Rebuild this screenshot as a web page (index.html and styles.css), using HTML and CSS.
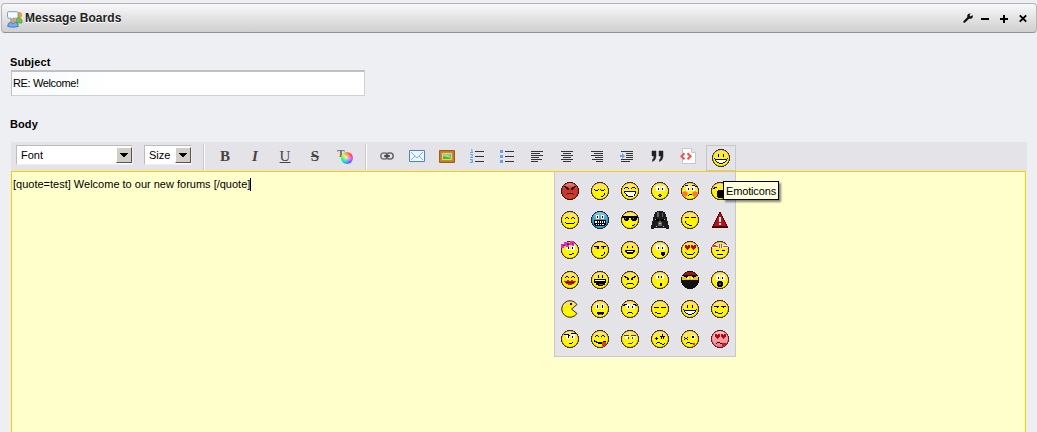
FILE: index.html
```html
<!DOCTYPE html>
<html lang="en">
<head>
<meta charset="utf-8">
<title>Message Boards</title>
<link rel="stylesheet" href="styles.css">
</head>
<body>
<svg class="defs" width="0" height="0">
  <defs>
    <radialGradient id="gy" cx=".5" cy=".75" r=".8"><stop offset="0" stop-color="#ffff00"/><stop offset=".5" stop-color="#fff200"/><stop offset=".8" stop-color="#ffe36a"/><stop offset="1" stop-color="#fbd49a"/></radialGradient>
    <linearGradient id="gr" x2="0" y2="1"><stop offset="0" stop-color="#e89078"/><stop offset=".4" stop-color="#c83428"/><stop offset="1" stop-color="#d84028"/></linearGradient>
    <linearGradient id="gb" x2="0" y2="1"><stop offset="0" stop-color="#98d0ec"/><stop offset=".5" stop-color="#3898cc"/><stop offset="1" stop-color="#40a8dc"/></linearGradient>
    <linearGradient id="gp" x2="0" y2="1"><stop offset="0" stop-color="#f8c8c0"/><stop offset="1" stop-color="#f47888"/></linearGradient>
    <path id="disc" d="M6 0h6v1h2v1h1v1h1v1h1v2h1v6h-1v2h-1v1h-1v1h-1v1h-2v1H6v-1H4v-1H3v-1H2v-1H1v-2H0V6h1V4h1V3h1V2h1V1h2z"/>
    <g id="face"><use href="#disc" fill="#42300a"/><circle cx="9" cy="9" r="8.1" fill="url(#gy)"/></g>
    <g id="eyes"><path fill="#fff" d="M5 4h4v5H5zM10 4h4v5h-4z"/><path d="M7 6h1v2H7zM11 6h1v2h-1z"/></g>
    <g id="hearts"><path fill="#c80010" d="M4 4h2v1h1V4h2v3H8v1H7v1H6V8H5V7H4zM10 4h2v1h1V4h2v3h-1v1h-1v1h-1V8h-1V7h-1z"/></g>
    <g id="grin"><path d="M6 5h1v3H6zM11 5h1v3h-1zM2 9h1v1h12V9h1v1h-1v2h-1v1h-1v1h-2v1H7v-1H5v-1H4v-1H3v-2H2z"/><path d="M4 11h10v1h-1v1h-2v1H7v-1H5v-1H4z" fill="#fff"/></g>
  </defs>
</svg>

<header class="portlet-bar">
  <svg class="board-icon" width="16" height="17" viewBox="0 0 16 17"><circle cx="12" cy="4" r="3" fill="#e9983c"/><path d="M9 12V8q3-3 6 1v3z" fill="#79bd50" stroke="#4c9b38" stroke-width=".7"/><circle cx="6" cy="9.500" r="2.600" fill="#efa04b"/><path d="M.7 15.500q0-4 3-4.500l2.300 2 2.300-2q3 .500 3 4.500-5 1.500-10.600 0z" fill="#75aef2" stroke="#2b6ec0" stroke-width=".8"/><path d="M1.500.7h8q1.500 0 1.500 1.500v3.500q0 1.500-1.500 1.500H6l-2 2v-2H2Q.5 7.200.5 5.700V2.200Q.5.700 1.500.7z" fill="#f7fbff" stroke="#6399cc" stroke-width=".9"/></svg>
  <h1>Message Boards</h1>
  <div class="controls">
    <svg width="10" height="10"><path d="M1.400 8.700L5.500 4.600" stroke="#111" stroke-width="2.200" stroke-linecap="round"/><path d="M7.800.6L6.500 2.200l1.200 1.200L9.500 2q1 2.600-1 3.500-2 .8-3.600-.5Q3.500 2.700 5 1.200 6.200.2 7.800.6z" fill="#111"/></svg>
    <svg width="8" height="10"><path d="M0 5h8v2H0z"/></svg>
    <svg width="8" height="10"><path d="M0 5h3V2h2v3h3v2H5v3H3V7H0z"/></svg>
    <svg width="8" height="10"><path d="M.8 2.300l6.400 6.400M7.200 2.300L.8 8.700" stroke="#000" stroke-width="1.900"/></svg>
  </div>
</header>

<main>
  <label class="label subject-label">Subject</label>
  <div class="subject">RE: Welcome!</div>
  <label class="label body-label">Body</label>

  <div class="toolbar">
    <div class="select font">Font<span class="drop"><svg width="8" height="4"><path d="M0 0h8v1H7v1H6v1H5v1H3V3H2V2H1V1H0z"/></svg></span></div>
    <div class="select size">Size<span class="drop"><svg width="8" height="4"><path d="M0 0h8v1H7v1H6v1H5v1H3V3H2V2H1V1H0z"/></svg></span></div>
    <i class="sep first"></i>
    <span class="btn letter bold">B</span>
    <span class="btn letter italic">I</span>
    <span class="btn letter under">U</span>
    <span class="btn letter strike">S</span>
    <span class="btn colour"><b>T</b><i></i></span>
    <i class="sep second"></i>
    <span class="btn"><svg width="14" height="8"><rect x=".8" y="1" width="7" height="6" rx="3" fill="none" stroke="#777" stroke-width="1.500"/><rect x="6.200" y="1" width="7" height="6" rx="3" fill="none" stroke="#666" stroke-width="1.500"/><path d="M4 4h6" stroke="#333" stroke-width="1.400"/></svg></span>
    <span class="btn"><svg width="16" height="12"><path d="M.5.500h15v11H.5z" fill="#eef6ff" stroke="#4a87c8"/><path d="M2 2l6 6 6-6M2 10l4-4M14 10l-4-4" fill="none" stroke="#86b4e2"/></svg></span>
    <span class="btn"><svg width="16" height="13"><path d="M.5.500h15v12H.5z" fill="#c98a35" stroke="#9b5d19"/><path d="M1.500 1.500h13v10h-13z" fill="none" stroke="#c07c2a"/><path d="M3.500 3.500h9v6h-9z" fill="#62c8e8" stroke="#f2cd70"/><path d="M4 9V7l2-2 3 2 3-2v4z" fill="#49b82e"/><path d="M4 6l3-2 5 3v1z" fill="#b5df4b"/></svg></span>
    <span class="btn"><svg width="14" height="14"><path d="M5 2.500h9M5 7.500h9M5 12.500h9" stroke="#333"/><path d="M1 .5h1v3M0 3.500h3M0 5.500h2.500v1.500L.5 8.500h2.500M0 10.500h2.500v3H0M1 12h1" fill="none" stroke="#6c9fe3"/></svg></span>
    <span class="btn"><svg width="14" height="14"><path d="M5 2.500h9M5 7.500h9M5 12.500h9" stroke="#333"/><path d="M0 1h3v3H0zM0 6h3v3H0zM0 11h3v3H0z" fill="#6c9fe3"/></svg></span>
    <span class="btn"><svg class="lines" width="12" height="12"><path d="M0 1.500h12M0 3.500h9M0 5.500h12M0 7.500h8M0 9.500h11M0 11.500h7"/></svg></span>
    <span class="btn"><svg class="lines" width="12" height="12"><path d="M0 1.500h12M2 3.500h8M0 5.500h12M2 7.500h8M0 9.500h12M2 11.500h8"/></svg></span>
    <span class="btn"><svg class="lines" width="12" height="12"><path d="M0 1.500h12M3 3.500h9M0 5.500h12M4 7.500h8M1 9.500h11M5 11.500h7"/></svg></span>
    <span class="btn"><svg class="lines" width="14" height="12"><path d="M1 1.500h12M6 3.500h7M6 5.500h7M6 7.500h7M1 9.500h12M1 11.500h9"/><path d="M0 5h2V3l3 3-3 3V7H0z" class="arrow"/></svg></span>
    <span class="btn"><svg width="14" height="12"><path d="M2 1h4v5.500Q5.500 10.500 2.500 11.500V9.800Q4 8.500 4.100 6H2zM9 1h4v5.500q-.5 4-3.500 5V9.800q1.500-1.300 1.600-3.800H9z" fill="#222" stroke="#222" stroke-width=".5"/></svg></span>
    <span class="btn code"><svg width="16" height="16"><path d="M2.500.5h9l4 4v11h-13z" fill="#fff" stroke="#c5c5ce"/><path d="M11.500.5v4h4" fill="#e4e4ea" stroke="#c5c5ce"/><path d="M4.500 5.200l-3 3 3 3M7.500 5.200l3 3-3 3" fill="none" stroke="#f15757" stroke-width="2.200"/></svg></span>
    <span class="btn active"><svg width="18" height="18"><use href="#face"/><use href="#grin"/></svg></span>

    <div class="emoticons">
      <svg viewBox="0 0 18 18"><use href="#disc" fill="#42100a"/><circle cx="9" cy="9" r="8.100" fill="url(#gr)"/><path d="M3 4h2v1h2v1h1v2H6V7H5V6H4V5H3zM15 4h-2v1h-2v1h-1v2h2V7h1V6h1V5h1zM6 11h6v1h1v1h-1v-1H6v1H5v-1h1z" fill="#300"/></svg>
      <svg viewBox="0 0 18 18"><use href="#face"/><path d="M3 7h1v1h3V7h1v1H7v1H4V8H3zM9 7h1v1h3V7h1v1h-1v1h-3V8H9zM13 11h1v2h-1v1h-1v1h-2v-1h2v-1h1z"/></svg>
      <svg viewBox="0 0 18 18"><use href="#face"/><path d="M3 7V6h1V5h3v1h1v1H7V6H4v1zM10 7V6h1V5h3v1h1v1h-1V6h-3v1zM3 9h12v3h-1v2h-2v1H7v-1H5v-2H4v-1H3z"/><path d="M4 10h10v2h-1v2H7v-1H6v-1H5v-1H4z" fill="#fff"/></svg>
      <svg viewBox="0 0 18 18"><use href="#face"/><use href="#eyes"/><path d="M8 12h2v1h1v1h-1v1H8v-1H7v-1h1z"/><path d="M8 13h2v1H8z" fill="#a63"/></svg>
      <svg viewBox="0 0 18 18"><use href="#face"/><use href="#eyes"/><path d="M4 3h3v1H3v1H2V4h2zM11 3h3v1h2v1h-2V4h-3z"/><circle cx="4" cy="12" r="2.700" fill="#ff7826"/><circle cx="14" cy="12" r="2.700" fill="#ff7826"/><path d="M8 12h3v1H8zM7 13h1v1H7z"/></svg>
      <svg viewBox="0 0 18 18"><use href="#face"/><path d="M2 6h1V5h3v1H4v1H2zM12 5h3v2h-3zM7 8h5v1h2v5h-2v2H7v-1H6V9h1z"/></svg>

      <svg viewBox="0 0 18 18"><use href="#face"/><path d="M4 7h1V6h2v1h1v1H7V7H5v1H4zM10 7h1V6h2v1h1v1h-1V7h-2v1h-1zM4 11h1v1h8v-1h1v1h-1v1H5v-1H4z"/></svg>
      <svg viewBox="0 0 18 18"><use href="#disc" fill="#102838"/><circle cx="9" cy="9" r="8.100" fill="url(#gb)"/><path d="M5 4h3v4H5zM10 4h3v4h-3z" fill="#fff"/><path d="M6 5h1v2H6zM11 5h1v2h-1zM3 9h12v5h-1v1H4v-1H3z"/><path d="M4 10h2v2H4zM7 10h1v2H7zM9 10h1v2H9zM11 10h1v2h-1zM13 10h1v2h-1zM5 13h1v1H5zM7 13h1v1H7zM9 13h1v1H9zM11 13h2v1h-2z" fill="#fff"/></svg>
      <svg viewBox="0 0 18 18"><use href="#face"/><path d="M1 5h16v2h-1v2h-1v1h-4V9h-1V7H8v2H7v1H4V9H3V7H1zM11 14h2v-1h1v1h-1v1h-2z"/><path d="M4 7h1v1H4zM12 7h1v1h-1z" fill="#888"/></svg>
      <svg viewBox="0 0 18 18"><path d="M6 0h6v1h2v2h1v3h1v4h1v4h1v4h-3v-1H3v1H0v-4h1v-4h1V6h1V3h1V1h2z" fill="#1c1c1c"/><path d="M6 1h2v5H6zM11 2h1v4h-1zM7 11h1v-1h2v1h1v4H7z" fill="#666"/><path d="M3 8h5v2H4zM10 8h5l-1 2h-4z"/><path d="M4 8h1v1H4zM13 8h1v1h-1zM8 12h2v1H8zM5 15h1v1H5zM12 15h1v1h-1z" fill="#bbb"/></svg>
      <svg viewBox="0 0 18 18"><use href="#face"/><path d="M4 6h4v1H4zM10 6h5v1h-5zM4 10h1v2h1v1h2v1H6v-1H5v-1H4zM8 14h3v1H8z"/></svg>
      <svg viewBox="0 0 18 18"><path d="M8 1h2v2h1v2h1v2h1v2h1v2h1v2h1v2h1v2H1v-2h1v-2h1v-2h1V9h1V7h1V5h1V3h1z" fill="#500"/><path d="M9 2L15.500 15h-13z" fill="#bb1118"/><path d="M8 6h2v5H8zM8 12h2v2H8z" fill="#fff"/></svg>

      <svg viewBox="0 0 18 18"><use href="#face"/><use href="#eyes"/><path d="M0 3h3V1h3v1h3V0h4v5h-2V4H8v2H5V5H3v2H0z" fill="#e92cb0"/><path d="M2 4h2v1H2zM6 2h2v2H6zM11 2h1v1h-1z" fill="#7b1464"/><path d="M8 13h3v-1h2v1h-2v1H8z"/></svg>
      <svg viewBox="0 0 18 18"><use href="#face"/><path d="M3 5h5v3H6V6H3zM10 5h5v1h-2v2h-1V6h-2zM13 11h1v2h-1v1h-1v1h-2v-1h2v-1h1z"/><path d="M4 6h2v2H4zM10 6h2v2h-2z" fill="#d9c030"/></svg>
      <svg viewBox="0 0 18 18"><use href="#face"/><path d="M6 5h1v2H6zM11 5h1v2h-1zM4 9h10v2h-1v1h-1v1H6v-1H5v-1H4z"/><path d="M6 10h6v1H6z" fill="#fff"/></svg>
      <svg viewBox="0 0 18 18"><use href="#face"/><use href="#eyes"/><path d="M10 11h4v3h-1v1h-2v-1h-1z"/></svg>
      <svg viewBox="0 0 18 18"><use href="#face"/><use href="#hearts"/><path d="M4 11h1v1h1v1h6v-1h1v-1h1v1h-1v1h-1v1H6v-1H5v-1H4z"/></svg>
      <svg viewBox="0 0 18 18"><use href="#face"/><path d="M1 4h16v3H1z" fill="#fff"/><path d="M1 4h4v1h2v1H1zM8 3h1v4H8zM10 3h1v4h-1zM12 5h5v1h-5z" fill="#e23b31"/><path d="M5 9h3v1H5zM11 9h3v1h-3zM6 13h6v1H6z"/></svg>

      <svg viewBox="0 0 18 18"><use href="#face"/><path d="M4 6h1V5h2v1h1v1H7V6H5v1H4zM10 6h1V5h2v1h1v1h-1V6h-2v1h-1z"/><path d="M3 10h3V9h2v1h2V9h2v1h3v1h-1v1h-1v1h-2v1H7v-1H5v-1H4v-1H3z" fill="#cf1820"/><path d="M5 11h8v1H5z" fill="#700"/></svg>
      <svg viewBox="0 0 18 18"><use href="#face"/><path d="M7 4h1v3H7zM11 4h1v3h-1zM3 8h12v4h-1v2h-2v1H7v-1H5v-2H3z"/><path d="M8 13h4v1H8z" fill="#df2420"/><path d="M4 9h10v1H4z" fill="#fff"/></svg>
      <svg viewBox="0 0 18 18"><use href="#face"/><path d="M3 5h2v1h2v1h1v2H6V7H4V6H3zM15 5h-2v1h-2v1h-1v2h2V7h2V6h1zM6 12h6v1h1v1h-1v-1H6v1H5v-1h1z"/></svg>
      <svg viewBox="0 0 18 18"><use href="#face"/><path d="M5 4h3v4H5zM10 4h3v4h-3z" fill="#fff"/><path d="M7 5h1v2H7zM10 5h1v2h-1zM9 12h2v3H9z"/></svg>
      <svg viewBox="0 0 18 18"><use href="#disc" fill="#111"/><path d="M1 5h16v4H1z" fill="#f1c600"/><path d="M3 3l3-2h6l3 2v1H3z" fill="#9b1712"/><path d="M3 5h4v1h4V5h4v1h-2v1h-2V6H7v1H5V6H3z"/><path d="M6 6h2v2H6zM10 6h2v2h-2z" fill="#fff"/></svg>
      <svg viewBox="0 0 18 18"><use href="#face"/><use href="#eyes"/><path d="M7 10h4v1h1v4h-1v1H7v-1H6v-4h1z"/><path d="M8 12h2v2H8z" fill="#543"/></svg>

      <svg viewBox="0 0 18 18"><path d="M16 4.500A8.300 8.300 0 1 0 16 13.500L10.500 9z" fill="url(#gy)" stroke="#322407"/><path d="M9 3h2v2H9z"/></svg>
      <svg viewBox="0 0 18 18"><use href="#face"/><path d="M5 4h3v5H5zM10 4h3v5h-3z" fill="#fff"/><path d="M6 5h1v3H6zM11 5h1v3h-1zM6 12h7v2h-1v1H7v-1H6z"/><path d="M8 14h3v1H8z" fill="#a77020"/></svg>
      <svg viewBox="0 0 18 18"><use href="#face"/><use href="#eyes"/><path d="M2 6V5h1V4h3v1H4v1zM16 6V5h-1V4h-3v1h2v1zM7 12h4v1h1v1h-1v-1H7v1H6v-1h1z"/></svg>
      <svg viewBox="0 0 18 18"><use href="#face"/><path d="M3 7h5v1H3zM10 7h5v1h-5zM4 12h2v1h4v1H6v-1H4z"/></svg>
      <svg viewBox="0 0 18 18"><use href="#face"/><use href="#grin"/></svg>
      <svg viewBox="0 0 18 18"><use href="#face"/><path d="M3 6h5v1H7v1H6V7H3zM10 6h5v1h-2v1h-1V7h-2zM4 11h1v1h2v1h4v-1h1v1h-1v1H7v-1H4z"/></svg>

      <svg viewBox="0 0 18 18"><use href="#face"/><use href="#eyes"/><path d="M3 4h5v1h1v1H7V5H3zM10 3h5v1h-5zM8 13h3v-1h1v1h-1v1H8z"/></svg>
      <svg viewBox="0 0 18 18"><use href="#face"/><path d="M4 6h1V5h2v1h1v1H7V6H5v1H4zM10 6h1V5h2v1h1v1h-1V6h-2v1h-1zM3 10h1v1h2v1h6v-1h3v1h-2v2H7v-1H5v-1H3z"/><path d="M11 12h4v3h-1v1h-3z" fill="#e13b28"/></svg>
      <svg viewBox="0 0 18 18"><use href="#face"/><path d="M4 6h4v3H4zM10 6h4v3h-4z" fill="#fff"/><path d="M3 5h5v1H3zM10 5h5v1h-5zM7 7h1v2H7zM11 7h1v2h-1zM7 13h4v-1h1v1h-1v1H7z" fill="#503c10"/></svg>
      <svg viewBox="0 0 18 18"><use href="#face"/><path d="M5 7h1v1h1v1H6v1H5V9H4V8h1zM11 4h1v2h2v1h-1v2h-1V7h-1v2h-1V7H9V6h2zM5 13h1v-1h3v1h2v1h2v-1h1v1h-1v1h-2v-1H9v-1H6v1H5z"/></svg>
      <svg viewBox="0 0 18 18"><use href="#face"/><path d="M3 7h1v1h1v1H4v1H3V9h1V8H3zM6 7h1v1H6v1h1v1H6V9H5V8h1zM5 13h1v-1h3v1h3v1H9v-1H6v1H5z"/><path d="M10 5h4v4h-4z" fill="#fff"/><path d="M11 6h2v2h-2z"/><path d="M11 13h3v2h-2z" fill="#e12e20"/></svg>
      <svg viewBox="0 0 18 18"><use href="#disc" fill="#5e1820"/><circle cx="9" cy="9" r="8.100" fill="url(#gp)"/><use href="#hearts"/><path d="M5 13h1v-1h3v1h3v1H9v-1H6v1H5z"/><path d="M11 13h4v2h-2v1h-2z" fill="#d51020"/></svg>
    </div>
    <div class="tooltip">Emoticons</div>
  </div>
  <div class="editor">[quote=test] Welcome to our new forums [/quote]<i class="caret"></i></div>
</main>
</body>
</html>
```
FILE: styles.css
```css
* { box-sizing: border-box; }
body {
  margin: 0;
  height: 432px;
  overflow: hidden;
  background: #eeeff2;
  color: #000;
  font: 11px/14px "Liberation Sans", Arial, sans-serif;
}
svg { display: block; flex: none; }
.defs { position: absolute; }

.portlet-bar {
  display: flex;
  align-items: center;
  height: 30px;
  margin: 3px 0 0 1px;
  padding: 0 9px 0 5px;
  border: 1px solid #b4b5b7;
  border-bottom-color: #929292;
  border-radius: 4px;
  background: linear-gradient(#f8f8f8, #cfcfcf);
}
.portlet-bar h1 { margin: 0 auto 0 1px; font-size: 12px; line-height: 16px; color: #222; letter-spacing: .08px; text-shadow: 0 1px #fff; }
.board-icon { margin: 2px 1px 0 0; }
.controls { display: flex; align-items: center; gap: 11px; }
.controls svg:first-child { margin-right: -3px; }

main { display: flex; flex-direction: column; padding: 22px 11px 0; }
.label { margin-left: -1px; font-weight: bold; letter-spacing: .1px; }
.subject {
  width: 354px;
  height: 26px;
  margin-top: 1px;
  padding: 4px 1px;
  border: 1px solid #d0d0d4;
  border-top: 2px solid #bfc0c2;
  border-left-color: #bfc0c2;
  background: linear-gradient(90deg, #f8fafb, #fff 30%);
  letter-spacing: -.36px;
}
.body-label { margin: 21px 0 11px -1px; }

.toolbar {
  position: relative;
  display: flex;
  align-items: center;
  width: 1016px;
  height: 29px;
  padding-left: 5px;
  background: #e4e3e8;
}
.select {
  display: flex;
  align-items: center;
  justify-content: space-between;
  height: 20px;
  margin-top: -3px;
  padding: 1px 0 1px 4px;
  border: 1px solid #bbb;
  border-right-color: #eee;
  border-bottom-color: #eee;
  background: #fff;
}
.font { width: 117px; }
.size { width: 48px; margin-left: 11px; }
.drop {
  display: grid;
  place-items: center;
  width: 16px;
  height: 16px;
  border: 1px solid;
  border-color: #fff #555 #555 #fff;
  background: #d2cec6;
}
.sep { width: 2px; height: 26px; border-left: 1px solid #c9c9cd; background: #fff; }
.first { margin: 0 5px 0 11px; }
.second { margin: 0 5px 0 5px; }
.btn { display: flex; align-items: center; justify-content: center; flex: none; width: 30px; height: 28px; margin-top: -1px; }
.letter { font: 15px/16px "Liberation Serif", serif; color: #444; }
.bold { font-weight: bold; }
.italic { font-weight: bold; font-style: italic; }
.under { text-decoration: underline; }
.strike { font-weight: bold; text-decoration: line-through; }
.colour { align-items: flex-start; padding-top: 7px; }
.colour b { font: bold 11px/9px "Liberation Serif", serif; color: #666; }
.colour i {
  width: 12px;
  height: 12px;
  margin: 3px 0 0 -4px;
  border-radius: 50%;
  background: radial-gradient(#fffb, #fff0 60%), conic-gradient(#ff8030, #f45, #d4f, #46f, #0ce, #3e6, #cf3, #ff8030);
}
.lines { stroke: #333; stroke-width: 1; }
.arrow { fill: #6ea4e4; stroke: none; }
.code { padding-left: 2px; }
.active { margin-left: 4px; border: 1px solid #c8c8cc; height: 26px; margin-top: 3px; }

.emoticons {
  position: absolute;
  z-index: 1;
  left: 543px;
  top: 30px;
  display: grid;
  grid-template-columns: repeat(6, 18px);
  grid-template-rows: repeat(6, 18px);
  column-gap: 12px;
  row-gap: 11.66px;
  width: 182px;
  height: 185px;
  padding: 9.8px 0 0 6px;
  border: 1px solid #c8c8cc;
  border-top: 0;
  background: #e4e3e8;
}
.tooltip {
  position: absolute;
  z-index: 2;
  left: 712px;
  top: 39px;
  width: 56px;
  height: 19px;
  padding-left: 2px;
  border: 1px solid #000;
  background: #ffffe1;
  box-shadow: 2px 2px 2px #0007;
  line-height: 18px;
  letter-spacing: -.15px;
}
.editor {
  width: 1015px;
  height: 262px;
  padding: 5px 1px;
  border: 1px solid #fc0;
  background: #ffc;
}
.caret { display: inline-block; width: 1px; height: 13px; background: #000; vertical-align: -3px; }
```
